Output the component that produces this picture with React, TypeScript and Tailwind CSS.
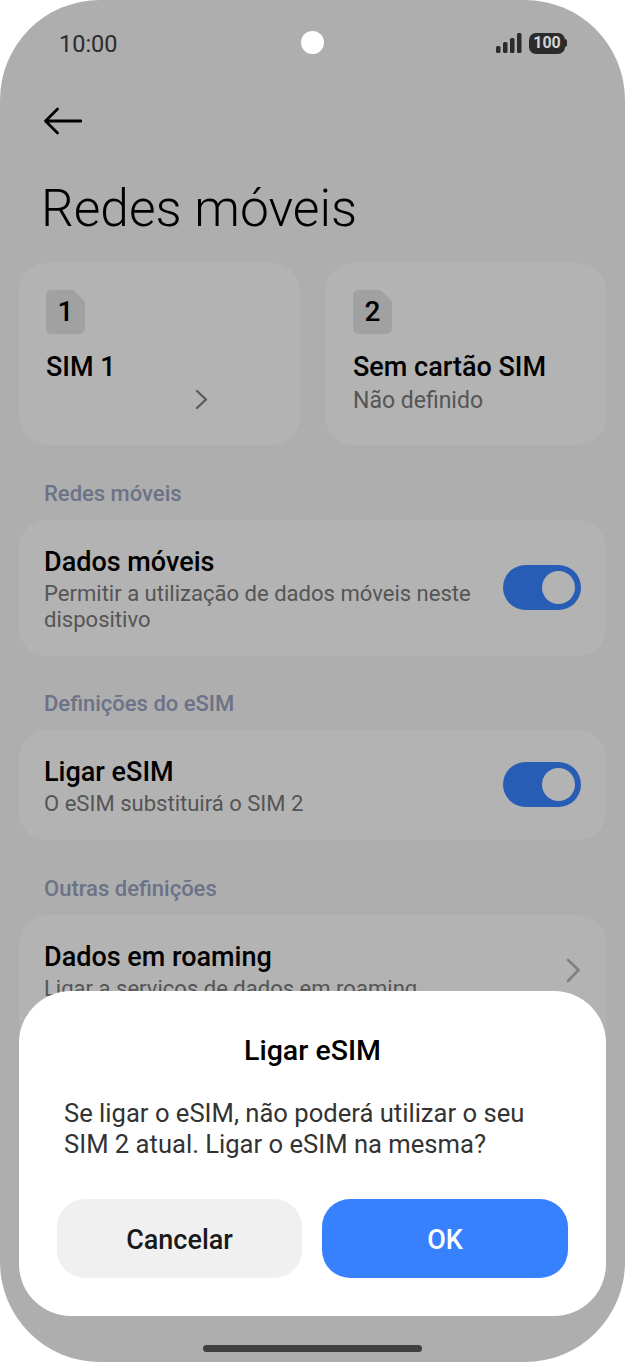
function SimBadge({ label }: { label: string }) {
    return (
        <div className="relative flex h-[44px] w-[39px] items-center justify-center">
            <svg className="absolute inset-0" width="39" height="44" viewBox="0 0 39 44">
                <path d="M6 0H25.5C27 0 28 .6 29 1.6L37.4 10C38.4 11 39 12 39 13.5V38C39 41.5 36.5 44 33 44H6C2.5 44 0 41.5 0 38V6C0 2.5 2.5 0 6 0Z" fill="#a1a1a1" />
            </svg>
            <span className="relative text-[28px] leading-none font-medium text-black">{label}</span>
        </div>
    );
}

function Toggle() {
    return (
        <div className="mb-[3px] flex h-[45px] w-[78px] shrink-0 items-center justify-end rounded-full bg-[#275db5] pr-[6px]">
            <div className="h-[33px] w-[33px] rounded-full bg-[#b3b3b3]" />
        </div>
    );
}

function SectionLabel({ children, className }: { children: string; className: string }) {
    return <div className={`px-[44px] text-[22px] leading-[28px] font-medium text-[#6c7287] ${className}`}>{children}</div>;
}

function SettingRow({ title, subtitle }: { title: string; subtitle: string }) {
    return (
        <div className="mx-[19px] flex items-center justify-between rounded-[28px] bg-[#b3b3b3] pt-[25px] pr-[25px] pb-[23px] pl-[25px]">
            <div className="w-[440px]">
                <div className="mb-[2px] text-[27px] leading-[34px] font-medium text-black">{title}</div>
                <div className="text-[22.05px] leading-[26px] text-[#555555]">{subtitle}</div>
            </div>
            <Toggle />
        </div>
    );
}

export default function App() {
    return (
        <div className="h-[1362px] w-[625px] bg-white font-['Roboto',sans-serif]">
            <div className="relative h-full overflow-hidden rounded-[100px] bg-[#aeaeae]">
                {/* status bar */}
                <div className="flex h-[86px] items-center justify-between pt-[2px] pr-[58px] pl-[59px]">
                    <span className="mt-[1px] text-[23.5px] text-[#2b2b2b]">10:00</span>
                    <div className="mb-[2px] flex items-center gap-[7px]">
                        <svg width="26" height="20" viewBox="0 0 26 20" className="text-[#2b2b2b]" fill="currentColor">
                            <rect x="0" y="13" width="4.5" height="7" rx="1.5" />
                            <rect x="7" y="9" width="4.5" height="11" rx="1.5" />
                            <rect x="14" y="5" width="4.5" height="15" rx="1.5" />
                            <rect x="21" y="0" width="4.5" height="20" rx="1.5" />
                        </svg>
                        <div className="flex items-center">
                            <div className="flex h-[21px] w-[36px] items-center justify-center rounded-[7px] bg-[#2b2b2b] text-[16px] font-bold text-[#d4d4d4]">100</div>
                            <div className="h-[8px] w-[2px] rounded-r-full bg-[#2b2b2b]" />
                        </div>
                    </div>
                </div>
                <div className="absolute top-[31px] left-[301px] h-[23px] w-[23px] rounded-full bg-white" />

                {/* back arrow */}
                <div className="mt-[21px] pl-[44px]">
                    <svg width="38" height="28" viewBox="0 0 38 28" fill="none" stroke="black" strokeWidth="2.8" strokeLinecap="round" strokeLinejoin="round">
                        <path d="M37 14H2M13.5 2 1.5 14 13.5 26" />
                    </svg>
                </div>

                <h1 className="mt-[44px] pl-[41px] text-[51.5px] leading-[60px] font-light text-black">Redes móveis</h1>

                {/* sim cards */}
                <div className="mt-[24px] grid grid-cols-2 gap-[25px] px-[19px]">
                    <div className="relative h-[182px] rounded-[28px] bg-[#b3b3b3] pt-[27px] pl-[27px]">
                        <SimBadge label="1" />
                        <div className="mt-[16px] text-[27px] leading-[34px] font-medium text-black">SIM 1</div>
                        <svg className="absolute top-[125px] left-[175px]" width="14" height="23" viewBox="0 0 14 23" fill="none" stroke="#5c5c5c" strokeWidth="2.4" strokeLinecap="round" strokeLinejoin="round">
                            <path d="M3 3 12 11.5 3 20" />
                        </svg>
                    </div>
                    <div className="h-[182px] rounded-[28px] bg-[#b3b3b3] pt-[27px] pl-[28px]">
                        <SimBadge label="2" />
                        <div className="mt-[16px] text-[27px] leading-[34px] font-medium text-black">Sem cartão SIM</div>
                        <div className="mt-[1px] text-[23px] leading-[32px] text-[#555555]">Não definido</div>
                    </div>
                </div>

                <SectionLabel className="mt-[35px] mb-[12px]">Redes móveis</SectionLabel>
                <SettingRow title="Dados móveis" subtitle="Permitir a utilização de dados móveis neste dispositivo" />

                <SectionLabel className="mt-[34px] mb-[12px]">Definições do eSIM</SectionLabel>
                <SettingRow title="Ligar eSIM" subtitle="O eSIM substituirá o SIM 2" />

                <SectionLabel className="mt-[35px] mb-[12px]">Outras definições</SectionLabel>
                <div className="relative mx-[19px] h-[150px] rounded-[28px] bg-[#b3b3b3] pt-[25px] pl-[25px]">
                    <div className="mb-[2px] text-[27px] leading-[34px] font-medium text-black">Dados em roaming</div>
                    <div className="text-[22.05px] leading-[26px] text-[#555555]">Ligar a serviços de dados em roaming</div>
                    <svg className="absolute top-[42px] right-[25px]" width="16" height="26" viewBox="0 0 16 26" fill="none" stroke="#808080" strokeWidth="2.6" strokeLinecap="round" strokeLinejoin="round">
                        <path d="M3 3 13.5 13 3 24" />
                    </svg>
                </div>

                {/* dialog */}
                <div className="absolute top-[991px] left-[19px] h-[325px] w-[587px] rounded-[52px] bg-white px-[38px] pt-[42px]">
                    <div className="text-center text-[28.5px] leading-[36px] font-medium text-black">Ligar eSIM</div>
                    <p className="mt-[29px] px-[7px] text-[25.6px] leading-[31px] text-[#333333]">
                        Se ligar o eSIM, não poderá utilizar o seu SIM 2 atual. Ligar o eSIM na mesma?
                    </p>
                    <div className="mt-[39px] grid grid-cols-[245px_246px] gap-[20px]">
                        <div className="flex h-[79px] items-center justify-center rounded-[28px] bg-[#f0f0f0] pt-[3px] text-[27px] font-medium text-[#1a1a1a]">Cancelar</div>
                        <div className="flex h-[79px] items-center justify-center rounded-[28px] bg-[#3781ff] pt-[3px] text-[27px] font-medium text-white">OK</div>
                    </div>
                </div>

                <div className="absolute top-[1345px] left-[203px] h-[7px] w-[219px] rounded-full bg-[#404040]" />
            </div>
        </div>
    );
}
